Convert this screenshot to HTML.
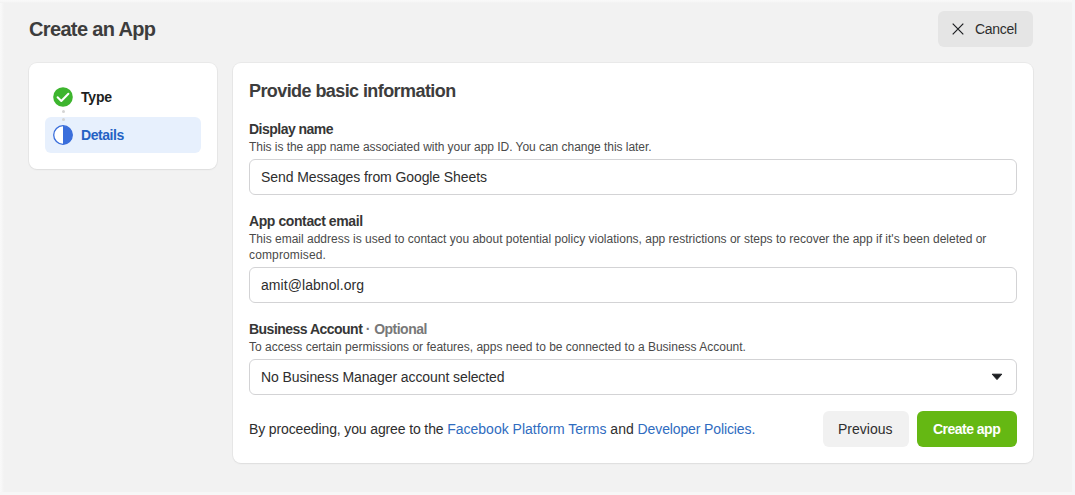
<!DOCTYPE html>
<html>
<head>
<meta charset="utf-8">
<style>
*{box-sizing:border-box;margin:0;padding:0}
html,body{width:1075px;height:495px;overflow:hidden}
body{background:#f7f7f7;font-family:"Liberation Sans",sans-serif;position:relative;color:#1c1e21}
#bg{position:absolute;left:0;top:0;width:1072px;height:492px;background:#f2f2f2}
#bgl{position:absolute;left:0;top:0;width:4px;height:492px;background:linear-gradient(to right,#f9f9f9,#f8f8f8 30%,#f2f2f2)}
#bgt{position:absolute;left:0;top:0;width:1072px;height:3px;background:linear-gradient(to bottom,#f9f9f9,#f8f8f8 40%,#f2f2f2)}
#bgr{position:absolute;left:1072px;top:0;width:3px;height:495px;background:#f5f6f8}
.abs{position:absolute;white-space:nowrap}
#title{left:29px;top:17px;font-size:20px;font-weight:bold;color:#3d3d3d;line-height:24px;letter-spacing:-0.65px}
#cancel{left:938px;top:11px;width:95px;height:36px;background:#e5e5e5;border-radius:6px}
#cancel .t{position:absolute;left:37px;top:10px;font-size:14px;line-height:16px;color:#2e2e2e;letter-spacing:-0.3px}
#cancel svg{position:absolute;left:14px;top:12px}
.card{position:absolute;background:#fff;border-radius:8px;box-shadow:0 0 0 1px rgba(0,0,0,0.035),0 1px 2px rgba(0,0,0,0.05)}
#left{left:29px;top:63px;width:188px;height:106px}
#main{left:233px;top:63px;width:800px;height:400px}
#sel{position:absolute;left:16px;top:54px;width:156px;height:36px;background:#e7f0fd;border-radius:6px}
.step{position:absolute;font-size:14px;font-weight:bold;line-height:16px}
.h{font-size:18px;font-weight:bold;color:#3d3d3d;line-height:20px;letter-spacing:-0.58px}
.lab{font-size:14px;font-weight:bold;color:#363636;line-height:16px;letter-spacing:-0.52px}
.desc{font-size:12px;color:#4a4a4a;line-height:16px}
.inp{position:absolute;left:16px;width:768px;height:36px;border:1px solid #d3d3d5;border-radius:6px}
.inp .v{position:absolute;left:11px;top:9px;font-size:14px;line-height:16px;color:#2e2e2e;letter-spacing:-0.09px}
.link{color:#2f6cc0}
.btn{position:absolute;height:36px;border-radius:6px;font-size:14px;line-height:16px}
</style>
</head>
<body>
<div id="bg"></div><div id="bgl"></div><div id="bgt"></div><div id="bgr"></div>
<div id="title" class="abs">Create an App</div>
<div id="cancel" class="abs">
  <svg width="12" height="12" viewBox="0 0 12 12"><path d="M0.7 0.7L11.3 11.3M11.3 0.7L0.7 11.3" stroke="#1c1e21" stroke-width="1.2" fill="none"/></svg>
  <div class="t">Cancel</div>
</div>

<div id="left" class="card">
  <div id="sel"></div>
  <svg class="abs" style="left:24px;top:24px" width="20" height="20" viewBox="0 0 20 20">
    <circle cx="10" cy="10" r="9.8" fill="#3db52e"/>
    <path d="M4.6 10.3L8.3 14L15.4 6.7" stroke="#fff" stroke-width="2" fill="none" stroke-linecap="round" stroke-linejoin="round"/>
  </svg>
  <div class="abs" style="left:32.5px;top:47px;width:3px;height:3px;border-radius:1.5px;background:#d4d4d4"></div>
  <div class="abs" style="left:32.5px;top:55px;width:3px;height:3px;border-radius:1.5px;background:#d4d4d4"></div>
  <svg class="abs" style="left:24px;top:62px" width="20" height="20" viewBox="0 0 20 20">
    <circle cx="10" cy="10" r="9.3" fill="#fff" stroke="#3a6edb" stroke-width="1.3"/>
    <path d="M10 0.7A9.3 9.3 0 0 1 10 19.3Z" fill="#3a6edb"/>
  </svg>
  <div class="step" style="left:52px;top:26px;color:#1c1e21;letter-spacing:-0.2px">Type</div>
  <div class="step" style="left:52px;top:64px;color:#2462c4;letter-spacing:-0.43px">Details</div>
</div>

<div id="main" class="card">
  <div class="abs h" style="left:16px;top:18px">Provide basic information</div>

  <div class="abs lab" style="left:16px;top:58px">Display name</div>
  <div class="abs desc" style="left:16px;top:76px;letter-spacing:-0.04px">This is the app name associated with your app ID. You can change this later.</div>
  <div class="inp" style="top:96px"><div class="v">Send Messages from Google Sheets</div></div>

  <div class="abs lab" style="left:16px;top:150px;letter-spacing:-0.41px">App contact email</div>
  <div class="abs desc" style="left:16px;top:168px">This email address is used to contact you about potential policy violations, app restrictions or steps to recover the app if it's been deleted or</div>
  <div class="abs desc" style="left:16px;top:184px;letter-spacing:0.14px">compromised.</div>
  <div class="inp" style="top:204px"><div class="v" style="letter-spacing:0.06px">amit@labnol.org</div></div>

  <div class="abs lab" style="left:16px;top:258px">Business Account <span style="color:#787878">· <span style="margin-left:1px">Optional</span></span></div>
  <div class="abs desc" style="left:16px;top:276px">To access certain permissions or features, apps need to be connected to a Business Account.</div>
  <div class="inp" style="top:296px"><div class="v">No Business Manager account selected</div>
    <svg class="abs" style="left:741px;top:13px" width="12" height="8" viewBox="0 0 12 8"><path d="M1.2 1.2H10.8L6 6.6Z" fill="#1c1e21" stroke="#1c1e21" stroke-width="1" stroke-linejoin="round"/></svg>
  </div>

  <div class="abs" style="left:16px;top:358px;font-size:14px;line-height:16px;color:#2e2e2e"><span style="letter-spacing:-0.13px">By proceeding, you agree to the </span><span class="link">Facebook Platform Terms</span> and <span class="link" style="letter-spacing:-0.12px">Developer Policies.</span></div>
  <div class="btn" style="left:590px;top:348px;width:86px;background:#f1f1f1"><span class="abs" style="left:15px;top:10px;color:#2e2e2e">Previous</span></div>
  <div class="btn" style="left:684px;top:348px;width:100px;background:#65b813"><span class="abs" style="left:16px;top:10px;color:#fff;font-weight:bold;letter-spacing:-0.52px">Create app</span></div>
</div>
</body>
</html>
